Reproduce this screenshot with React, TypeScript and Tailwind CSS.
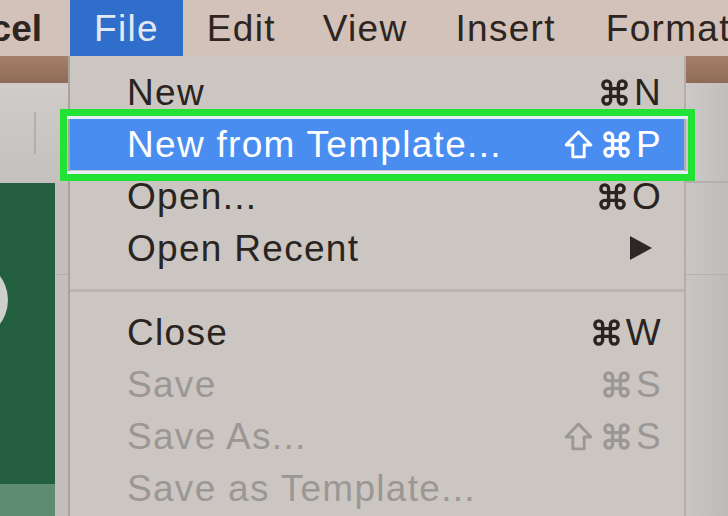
import React from 'react'

// ── Glyphs for the shortcut column ─────────────
function CmdGlyph() {
  return (
    <svg viewBox="0 0 24 24" width="31" height="31" fill="none" stroke="currentColor" strokeWidth="2.6" strokeLinecap="round" strokeLinejoin="round">
      <path d="M15 6v12a3 3 0 1 0 3-3H6a3 3 0 1 0 3 3V6a3 3 0 1 0-3 3h12a3 3 0 1 0-3-3" />
    </svg>
  )
}

function ShiftGlyph() {
  return (
    <svg viewBox="0 0 30 30" width="31" height="31" fill="none" stroke="currentColor" strokeWidth="2.8" strokeLinejoin="round">
      <path d="M15 3 L27 15.5 H20.5 V27 H9.5 V15.5 H3 Z" />
    </svg>
  )
}

function Shortcut({ shift, letter }: { shift?: boolean; letter: string }) {
  return (
    <span className="flex items-center gap-[7px]">
      {shift && <ShiftGlyph />}
      <CmdGlyph />
      <span className="-ml-[3px]">{letter}</span>
    </span>
  )
}

type Item = { label: string; key?: string; shift?: boolean; sub?: boolean; off?: boolean; active?: boolean }

const TOP: Item[] = [
  { label: 'New', key: 'N' },
  { label: 'New from Template...', key: 'P', shift: true, active: true },
  { label: 'Open...', key: 'O' },
  { label: 'Open Recent', sub: true },
]

const BOTTOM: Item[] = [
  { label: 'Close', key: 'W' },
  { label: 'Save', key: 'S', off: true },
  { label: 'Save As...', key: 'S', shift: true, off: true },
  { label: 'Save as Template...', off: true },
]

function MenuRow({ item }: { item: Item }) {
  const color = item.active ? 'text-white bg-[#4a8df0]' : item.off ? 'text-[#9b9794]' : 'text-[#2a2421]'
  return (
    <div className={`h-[52px] flex items-center justify-between pl-[57px] pr-[22px] ${color}`}>
      <span className="whitespace-nowrap">{item.label}</span>
      {item.key && <Shortcut shift={item.shift} letter={item.key} />}
      {item.sub && (
        <svg width="26" height="26" viewBox="0 0 26 26" className="mr-[8px]">
          <polygon points="2,1 24,13 2,25" fill="#2d2826" />
        </svg>
      )}
    </div>
  )
}

export default function App() {
  return (
    <div className="w-[728px] h-[516px] relative overflow-hidden bg-[#c8c5c3] font-['Liberation_Sans',Arial,sans-serif] text-[37px] tracking-[0.035em] leading-none">

      {/* Menu bar */}
      <div className="h-[56px] flex items-stretch bg-[#d2c2b9] text-[#2e2420]">
        <div className="w-[70px] shrink-0 flex items-center justify-end pr-[28px] overflow-hidden">
          <span className="font-bold whitespace-nowrap tracking-normal">Excel</span>
        </div>
        <div className="shrink-0 flex items-center px-[24px] bg-[#2f6fcb] text-[#e3e9f3]">File</div>
        <div className="shrink-0 flex items-center px-[24px]">Edit</div>
        <div className="shrink-0 flex items-center px-[23px]">View</div>
        <div className="shrink-0 flex items-center px-[25px]">Insert</div>
        <div className="shrink-0 flex items-center px-[25px] whitespace-nowrap">Format</div>
      </div>

      <div className="flex h-[460px]">
        {/* Left: window behind the menu */}
        <div className="w-[68px] shrink-0 flex flex-col">
          <div className="h-[27px] bg-gradient-to-b from-[#a67f68] to-[#8f6b57]" />
          <div className="h-[100px] bg-gradient-to-b from-[#cfccca] to-[#c3c0be] flex items-center pl-[34px]">
            <div className="w-[2px] h-[42px] bg-[#b2afad]" />
          </div>
          <div className="flex-1 flex">
            <div className="w-[55px] flex flex-col">
              <div className="flex-1 bg-[#245f40] relative overflow-hidden">
                <div className="absolute -left-[72px] top-[77px] w-[80px] h-[80px] rounded-full bg-[#cfd0cd]" />
              </div>
              <div className="h-[32px] bg-[#5d8c70]" />
            </div>
            <div className="flex-1 flex flex-col bg-[#c2bfbd]">
              <div className="h-[92px] border-b border-[#b3b0ae]" />
            </div>
          </div>
        </div>

        {/* File menu */}
        <div className="w-[618px] shrink-0 bg-[#cbc6c2] border-l-2 border-[#a7a29f] border-r-2 border-r-[#b3aeab] pt-[10px]">
          {TOP.map((it) => <MenuRow key={it.label} item={it} />)}
          <div className="h-[32px] flex items-center">
            <div className="w-full h-[3px] bg-[#b9b4b0]" />
          </div>
          {BOTTOM.map((it) => <MenuRow key={it.label} item={it} />)}
        </div>

        {/* Right: window behind the menu */}
        <div className="flex-1 flex flex-col">
          <div className="h-[27px] bg-gradient-to-b from-[#a67f68] to-[#8f6b57]" />
          <div className="h-[100px] bg-gradient-to-r from-[#cdcbc9] to-[#c0bdbb] border-b-2 border-[#b2afad]" />
          <div className="h-[92px] bg-gradient-to-r from-[#c9c7c5] to-[#bfbcba] border-b border-[#b3b0ae]" />
          <div className="flex-1 bg-gradient-to-r from-[#c8c6c4] to-[#bdbab8]" />
        </div>
      </div>

      {/* Green annotation box around the highlighted item */}
      <div className="absolute left-[60px] top-[109px] w-[635px] h-[72px] border-[7px] border-[#22e236] shadow-[inset_0_3px_0_#e8eef7,inset_0_-3px_0_#e8eef7]" />
    </div>
  )
}
